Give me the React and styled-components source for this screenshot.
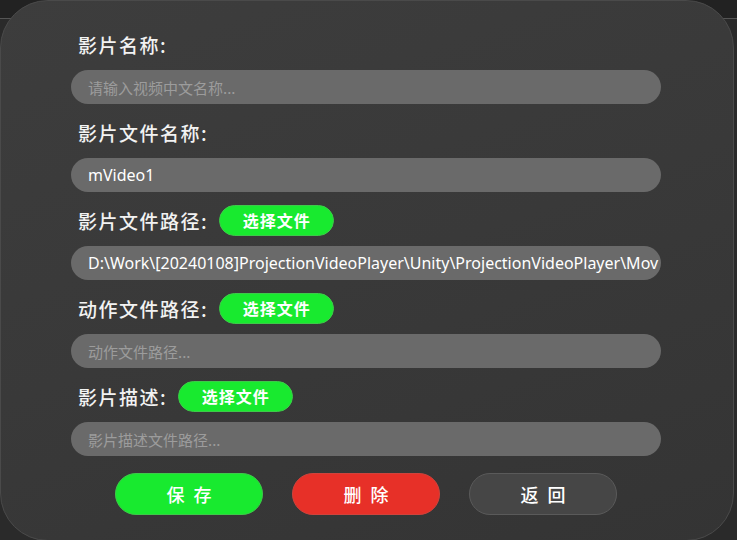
import React from "react";
import styled, { createGlobalStyle } from "styled-components";

const GlobalStyle = createGlobalStyle`
  html, body {
    margin: 0;
    padding: 0;
    width: 737px;
    height: 540px;
    overflow: hidden;
    background: linear-gradient(to bottom, #222 0, #222 18px, #555 18px, #555 19px, #2a2a2a 19px);
    font-family: "Noto Sans CJK SC", "Noto Sans", sans-serif;
  }
`;

const Panel = styled.div`
  box-sizing: border-box;
  width: 734px;
  height: 541px;
  border-radius: 48px;
  border: 1px solid #4a4a4a;
  background: linear-gradient(160deg, #3d3d3d 0%, #393939 50%, #343434 100%);
  padding: 27px 72px 0 70px;
  display: flex;
  flex-direction: column;
  gap: 12px;
`;

const Field = styled.div`
  display: flex;
  flex-direction: column;
  gap: 10px;
`;

const LabelRow = styled.div`
  height: 32px;
  display: flex;
  align-items: center;
  padding-left: 7px;
`;

const Label = styled.span`
  color: #f2f2f2;
  font-size: 19px;
  font-weight: 500;
  letter-spacing: 1.5px;
`;

const PickButton = styled.button`
  box-sizing: border-box;
  margin-left: 11px;
  width: 115px;
  height: 31px;
  border-radius: 16px;
  border: 1px solid #3ec94a;
  background: #18ea2f;
  color: #fff;
  font-family: inherit;
  font-size: 16px;
  font-weight: 600;
  letter-spacing: 1px;
  padding: 0;
`;

const Input = styled.div`
  box-sizing: border-box;
  height: 34px;
  border-radius: 17px;
  background: #6a6a6a;
  padding: 0 0 0 17px;
  display: flex;
  align-items: center;
  overflow: hidden;
  white-space: nowrap;
  font-size: ${(p) => (p.$latin ? "16px" : "15px")};
  color: ${(p) => (p.$empty ? "#9c9c9c" : "#ffffff")};
  font-family: ${(p) =>
    p.$latin
      ? `"Noto Sans", "Noto Sans CJK SC", sans-serif`
      : `"Noto Sans CJK SC", sans-serif`};
`;

const Actions = styled.div`
  margin-top: 5px;
  display: flex;
  justify-content: center;
  gap: 29px;
`;

const ActionButton = styled.button`
  box-sizing: border-box;
  width: 148px;
  height: 42px;
  border-radius: 21px;
  border: 1px solid ${(p) => p.$border};
  background: ${(p) => p.$bg};
  color: #fff;
  font-family: inherit;
  font-size: 18px;
  font-weight: 500;
  letter-spacing: 9px;
  padding: 0 0 0 9px;
`;

const fields = [
  { label: "影片名称:", value: "请输入视频中文名称...", empty: true },
  { label: "影片文件名称:", value: "mVideo1", latin: true },
  {
    label: "影片文件路径:",
    pick: true,
    value:
      "D:\\Work\\[20240108]ProjectionVideoPlayer\\Unity\\ProjectionVideoPlayer\\Mov",
    latin: true,
  },
  { label: "动作文件路径:", pick: true, value: "动作文件路径...", empty: true },
  { label: "影片描述:", pick: true, value: "影片描述文件路径...", empty: true },
];

export default function App() {
  return (
    <>
      <GlobalStyle />
      <Panel>
        {fields.map((f) => (
          <Field key={f.label}>
            <LabelRow>
              <Label>{f.label}</Label>
              {f.pick && <PickButton>选择文件</PickButton>}
            </LabelRow>
            <Input $empty={f.empty} $latin={f.latin}>
              {f.value}
            </Input>
          </Field>
        ))}
        <Actions>
          <ActionButton $bg="#18ea2f" $border="#3ec94a">保存</ActionButton>
          <ActionButton $bg="#e73028" $border="#d0433c">删除</ActionButton>
          <ActionButton $bg="#464646" $border="#5a5a5a">返回</ActionButton>
        </Actions>
      </Panel>
    </>
  );
}
